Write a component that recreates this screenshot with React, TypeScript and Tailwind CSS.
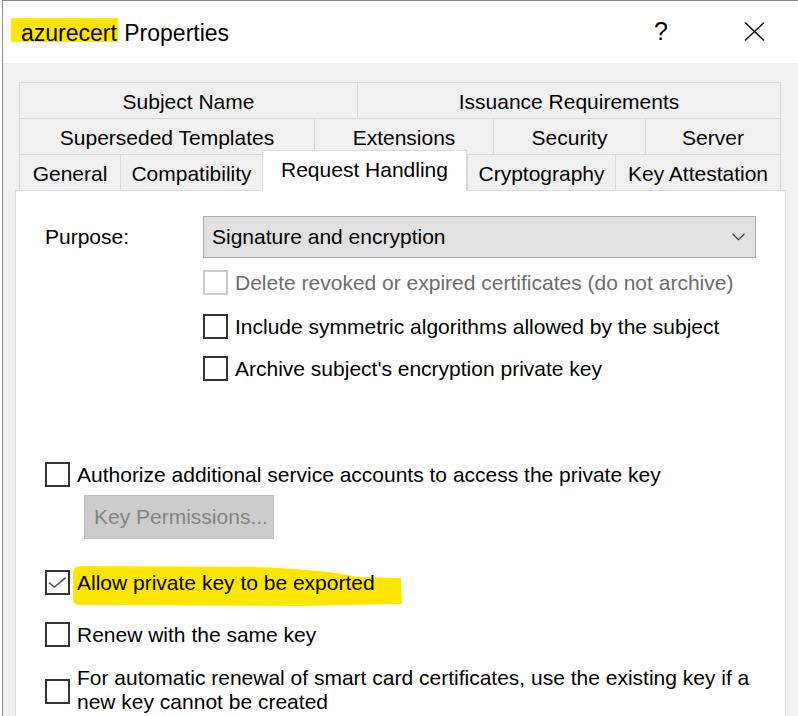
import type { ReactNode } from 'react'

const row1 = [
  { label: 'Subject Name', w: 'w-[338px]' },
  { label: 'Issuance Requirements', w: 'w-[424px]' },
]

const row2 = [
  { label: 'Superseded Templates', w: 'w-[295px]' },
  { label: 'Extensions', w: 'w-[179px]' },
  { label: 'Security', w: 'w-[152px]' },
  { label: 'Server', w: 'w-[136px]' },
]

const row3 = [
  { label: 'General', w: 'w-[101px]' },
  { label: 'Compatibility', w: 'w-[142px]' },
  { label: 'Request Handling', w: 'w-[205px]', active: true },
  { label: 'Cryptography', w: 'w-[148px]' },
  { label: 'Key Attestation', w: 'w-[166px]' },
]

type Tab = { label: string; w: string; active?: boolean }

function TabRow({ tabs, className = '' }: { tabs: Tab[]; className?: string }) {
  return (
    <div className={`flex items-end ${className}`}>
      {tabs.map((t, i) => (
        <div
          key={t.label}
          className={
            t.active
              ? `${t.w} relative z-10 -mb-px flex h-[41px] justify-center border-x border-t border-[#d9d9d9] bg-white pt-[6px] leading-[25px]`
              : `${t.w} flex h-[36px] justify-center border-t border-l border-[#d9d9d9] bg-[#f0f0f0] pt-[6px] leading-[25px] ${
                  i === tabs.length - 1 ? 'border-r' : ''
                }`
          }
        >
          {t.label}
        </div>
      ))}
    </div>
  )
}

function Checkbox({ checked = false, disabled = false }: { checked?: boolean; disabled?: boolean }) {
  return (
    <div
      className={`h-[25px] w-[25px] shrink-0 border-2 bg-white ${disabled ? 'border-[#cccccc]' : 'border-[#333333]'}`}
    >
      {checked && (
        <svg viewBox="0 0 21 21" className="h-full w-full">
          <path d="M2 10.7 L7.3 15 L18.7 5.7" fill="none" stroke="#4d4d4d" strokeWidth="1.5" />
        </svg>
      )}
    </div>
  )
}

function CheckRow({
  children,
  checked,
  disabled,
  className = '',
}: {
  children: ReactNode
  checked?: boolean
  disabled?: boolean
  className?: string
}) {
  return (
    <div className={`flex h-[25px] items-center gap-[7px] ${className}`}>
      <Checkbox checked={checked} disabled={disabled} />
      <span className={`relative leading-[24px] ${disabled ? 'text-[#6d6d6d]' : ''}`}>{children}</span>
    </div>
  )
}

export default function App() {
  return (
    <div
      className="h-[716px] w-[798px] overflow-hidden bg-white text-[21px] text-black"
      style={{ fontFamily: '"Liberation Sans", Arial, sans-serif' }}
    >
      <div className="ml-[2px] h-full border-t border-l border-[#8a8a8a]">
        {/* title bar */}
        <div className="flex h-[62px] items-start bg-white pl-[8px] pt-[17px] text-[23px]">
          <div className="leading-[26px]">
            <span className="inline-block h-[24px] bg-[#ffe600] pl-[10px] pr-px pt-[6px] leading-[18px]">azurecert</span>{' '}
            Properties
          </div>
          <span className="ml-auto text-[25px] leading-[26px]">?</span>
          <svg width="21" height="19" viewBox="0 0 21 19" className="ml-[76px] mr-[33px] mt-[4px]">
            <path d="M1 0.5 L20 18.5 M20 0.5 L1 18.5" stroke="#111" strokeWidth="1.5" />
          </svg>
        </div>

        {/* body */}
        <div className="h-full bg-[#f0f0f0] pl-[12px] pt-[19px]">
          <div className="ml-[4px] w-[762px]">
            <TabRow tabs={row1} />
            <TabRow tabs={row2} />
            <TabRow tabs={row3} className="-mt-[4px]" />
          </div>

          <div className="h-[560px] w-[771px] border border-[#d9d9d9] bg-white pl-[29px]">
            <div className="mt-[25px] flex items-center">
              <span className="w-[158px] leading-[24px]">Purpose:</span>
              <div className="flex h-[42px] w-[553px] items-center justify-between border border-[#adadad] bg-[#e1e1e1] pl-[8px] pr-[10px]">
                <span className="leading-[24px]">Signature and encryption</span>
                <svg width="13" height="8" viewBox="0 0 13 8">
                  <path d="M0.5 0.8 L6.5 6.6 L12.5 0.8" fill="none" stroke="#404040" strokeWidth="1.3" />
                </svg>
              </div>
            </div>

            <div className="ml-[158px]">
              <CheckRow disabled className="mt-[12px]">
                Delete revoked or expired certificates (do not archive)
              </CheckRow>
              <CheckRow className="mt-[19px]">Include symmetric algorithms allowed by the subject</CheckRow>
              <CheckRow className="mt-[17px]">Archive subject's encryption private key</CheckRow>
            </div>

            <CheckRow className="mt-[81px]">Authorize additional service accounts to access the private key</CheckRow>
            <button className="ml-[39px] mt-[8px] flex h-[44px] w-[190px] items-center border border-[#bfbfbf] bg-[#cccccc] pl-[9px] leading-[24px] text-[#838383]">
              Key Permissions...
            </button>

            <div className="relative mt-[31px]">
              <svg width="360" height="40" className="absolute left-0 top-0 overflow-visible">
                <path
                  d="M28 1 Q29 -4 37 -4 L205 -3 Q275 -1 312 7 L356 8 L357 34 L255 36 L35 35 Q28 35 28 29 Z"
                  fill="#ffe600"
                />
              </svg>
              <CheckRow checked>Allow private key to be exported</CheckRow>
            </div>

            <CheckRow className="mt-[27px]">Renew with the same key</CheckRow>

            <div className="mt-[19px] flex items-start gap-[7px]">
              <div className="mt-[13px]">
                <Checkbox />
              </div>
              <span className="leading-[24px]">
                For automatic renewal of smart card certificates, use the existing key if a
                <br />
                new key cannot be created
              </span>
            </div>
          </div>
        </div>
      </div>
    </div>
  )
}
